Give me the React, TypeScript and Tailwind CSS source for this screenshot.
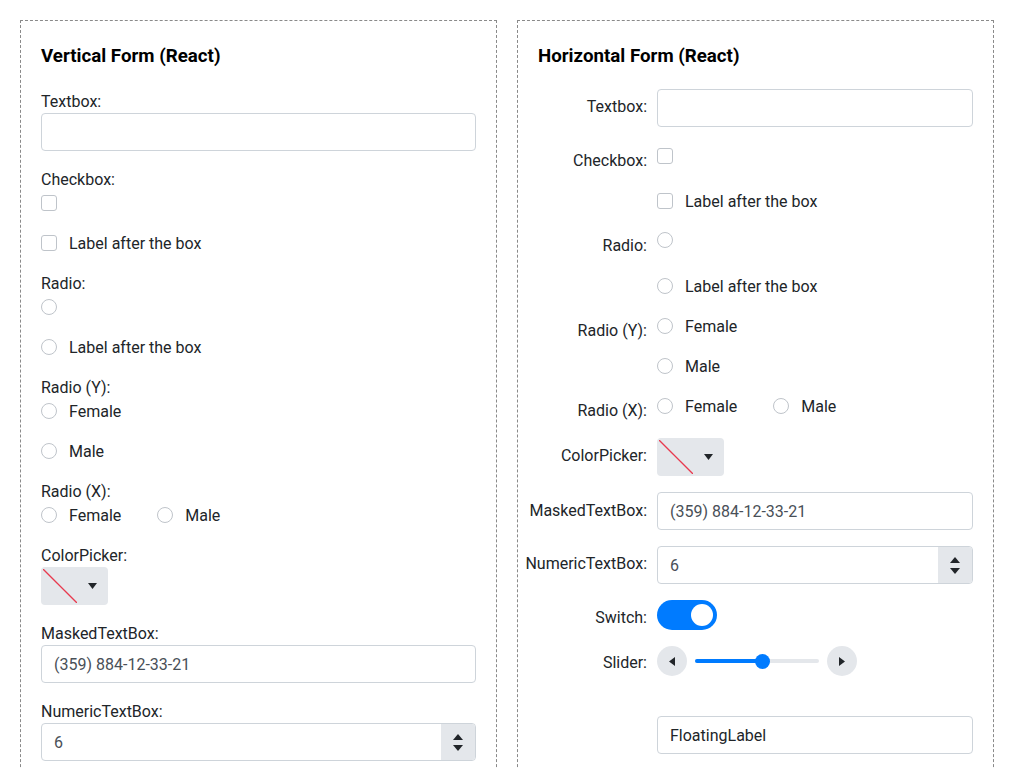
import React from "react";

const font = { fontFamily: "Roboto, 'Noto Sans', sans-serif" };

function Checkbox() {
  return <span className="inline-block w-4 h-4 shrink-0 rounded-[3px] border border-[#bfc4ca] bg-white" />;
}
function Radio() {
  return <span className="inline-block w-4 h-4 shrink-0 rounded-full border border-[#bfc4ca] bg-white" />;
}

function Up() {
  return (
    <svg width="10" height="6" viewBox="0 0 10 6"><path d="M5 0 L10 6 L0 6 Z" fill="#212529" /></svg>
  );
}
function Down() {
  return (
    <svg width="10" height="6" viewBox="0 0 10 6"><path d="M0 0 L10 0 L5 6 Z" fill="#212529" /></svg>
  );
}

function TextInput({ value, dark }: { value?: string; dark?: boolean }) {
  return (
    <div className={"h-[38px] w-full rounded-[4px] border border-[#ced4da] bg-white px-3 pt-[2px] flex items-center text-base " + (dark ? "text-[#212529]" : "text-[#495057]")}>
      {value}
    </div>
  );
}

function Numeric() {
  return (
    <div className="h-[38px] w-full rounded-[4px] border border-[#ced4da] bg-white flex overflow-hidden">
      <div className="flex-1 px-3 pt-[2px] flex items-center text-[#495057]">6</div>
      <div className="w-[34px] bg-[#e4e7eb] flex flex-col items-center justify-center gap-[5px]">
        <Up />
        <Down />
      </div>
    </div>
  );
}

function ColorPicker() {
  return (
    <div className="w-[67px] h-[38px] rounded-[4px] bg-[#e4e7eb] flex items-center">
      <div className="ml-[2px] w-[34px] h-[34px] shrink-0">
        <svg width="34" height="34" viewBox="0 0 34 34">
          <line x1="0" y1="0" x2="34" y2="34" stroke="#e83a4f" strokeWidth="1.3" />
        </svg>
      </div>
      <div className="flex-1 flex justify-center">
        <svg width="9" height="6" viewBox="0 0 9 6"><path d="M0 0 L9 0 L4.5 6 Z" fill="#212529" /></svg>
      </div>
    </div>
  );
}

function CheckRow({ label }: { label?: string }) {
  return (
    <div className="h-6 flex items-center gap-3">
      <Checkbox />
      {label && <span className="pt-[2px]">{label}</span>}
    </div>
  );
}
function RadioRow({ label }: { label?: string }) {
  return (
    <div className="h-6 flex items-center gap-3">
      <Radio />
      {label && <span className="pt-[2px]">{label}</span>}
    </div>
  );
}
function RadioX() {
  return (
    <div className="h-6 flex items-center gap-9">
      <div className="flex items-center gap-3"><Radio /><span className="pt-[2px]">Female</span></div>
      <div className="flex items-center gap-3"><Radio /><span className="pt-[2px]">Male</span></div>
    </div>
  );
}

function Label({ children }: { children: React.ReactNode }) {
  return <div className="pt-[2px] leading-[22px]">{children}</div>;
}

function VerticalForm() {
  return (
    <div className="w-[477px] shrink-0 border border-dashed border-[#8a8a8a] px-5 pt-[23px] pb-20">
      <h3 className="text-[18.72px] font-bold leading-6 mb-[21px] text-black">Vertical Form (React)</h3>
      <div className="flex flex-col gap-4">
        <div>
          <Label>Textbox:</Label>
          <TextInput />
        </div>
        <div>
          <Label>Checkbox:</Label>
          <CheckRow />
        </div>
        <CheckRow label="Label after the box" />
        <div>
          <Label>Radio:</Label>
          <RadioRow />
        </div>
        <RadioRow label="Label after the box" />
        <div>
          <Label>Radio (Y):</Label>
          <div className="flex flex-col gap-4">
            <RadioRow label="Female" />
            <RadioRow label="Male" />
          </div>
        </div>
        <div>
          <Label>Radio (X):</Label>
          <RadioX />
        </div>
        <div>
          <Label>ColorPicker:</Label>
          <ColorPicker />
        </div>
        <div>
          <Label>MaskedTextBox:</Label>
          <TextInput value="(359) 884-12-33-21" />
        </div>
        <div>
          <Label>NumericTextBox:</Label>
          <Numeric />
        </div>
      </div>
    </div>
  );
}

function HRow({ label, pt, mt, children }: { label?: string; pt: string; mt: string; children: React.ReactNode }) {
  return (
    <div className={"flex items-start " + mt}>
      <div className={"w-[109px] shrink-0 flex justify-end whitespace-nowrap leading-6 " + pt}>{label}</div>
      <div className="ml-[10px] flex-1 min-w-0">{children}</div>
    </div>
  );
}

function SliderBtn({ dir }: { dir: "l" | "r" }) {
  return (
    <div className="w-[30px] h-[30px] rounded-full bg-[#e4e7eb] flex items-center justify-center shrink-0">
      <svg width="6" height="9" viewBox="0 0 6 9">
        {dir === "l" ? <path d="M6 0 L6 9 L0 4.5 Z" fill="#212529" /> : <path d="M0 0 L6 4.5 L0 9 Z" fill="#212529" />}
      </svg>
    </div>
  );
}

function HorizontalForm() {
  return (
    <div className="w-[477px] shrink-0 border border-dashed border-[#8a8a8a] px-5 pt-[23px] pb-10">
      <h3 className="text-[18.72px] font-bold leading-6 mb-[21px] text-black">Horizontal Form (React)</h3>
      <HRow label="Textbox:" pt="pt-[6px]" mt="mt-0">
        <TextInput />
      </HRow>
      <HRow label="Checkbox:" pt="pt-[5px]" mt="mt-[17px]">
        <CheckRow />
      </HRow>
      <HRow pt="pt-0" mt="mt-[16px]">
        <CheckRow label="Label after the box" />
      </HRow>
      <HRow label="Radio:" pt="pt-[6px]" mt="mt-[15px]">
        <RadioRow />
      </HRow>
      <HRow pt="pt-0" mt="mt-[16px]">
        <RadioRow label="Label after the box" />
      </HRow>
      <HRow label="Radio (Y):" pt="pt-[5px]" mt="mt-4">
        <div className="flex flex-col gap-4">
          <RadioRow label="Female" />
          <RadioRow label="Male" />
        </div>
      </HRow>
      <HRow label="Radio (X):" pt="pt-[5px]" mt="mt-4">
        <RadioX />
      </HRow>
      <HRow label="ColorPicker:" pt="pt-[6px]" mt="mt-[15px]">
        <ColorPicker />
      </HRow>
      <HRow label="MaskedTextBox:" pt="pt-[7px]" mt="mt-4">
        <TextInput value="(359) 884-12-33-21" />
      </HRow>
      <HRow label="NumericTextBox:" pt="pt-[6px]" mt="mt-4">
        <Numeric />
      </HRow>
      <HRow label="Switch:" pt="pt-[6px]" mt="mt-4">
        <div className="w-[60px] h-[30px] rounded-full bg-[#007bff] flex items-center justify-end pr-[4px]">
          <span className="w-[22px] h-[22px] rounded-full bg-white" />
        </div>
      </HRow>
      <HRow label="Slider:" pt="pt-[5px]" mt="mt-4">
        <div className="flex items-center h-[30px]">
          <SliderBtn dir="l" />
          <div className="mx-2 w-[124px] h-[4px] rounded-full bg-[#e4e7eb] flex items-center">
            <div className="w-[67px] h-[4px] rounded-full bg-[#007bff]" />
            <div className="w-[15px] h-[15px] rounded-full bg-[#007bff] -ml-[7px] shrink-0" />
          </div>
          <SliderBtn dir="r" />
        </div>
      </HRow>
      <HRow pt="pt-0" mt="mt-10">
        <TextInput value="FloatingLabel" dark />
      </HRow>
    </div>
  );
}

export default function App() {
  return (
    <div className="flex items-stretch gap-5 p-5 text-base text-[#212529] bg-white min-h-screen" style={font}>
      <VerticalForm />
      <HorizontalForm />
    </div>
  );
}
